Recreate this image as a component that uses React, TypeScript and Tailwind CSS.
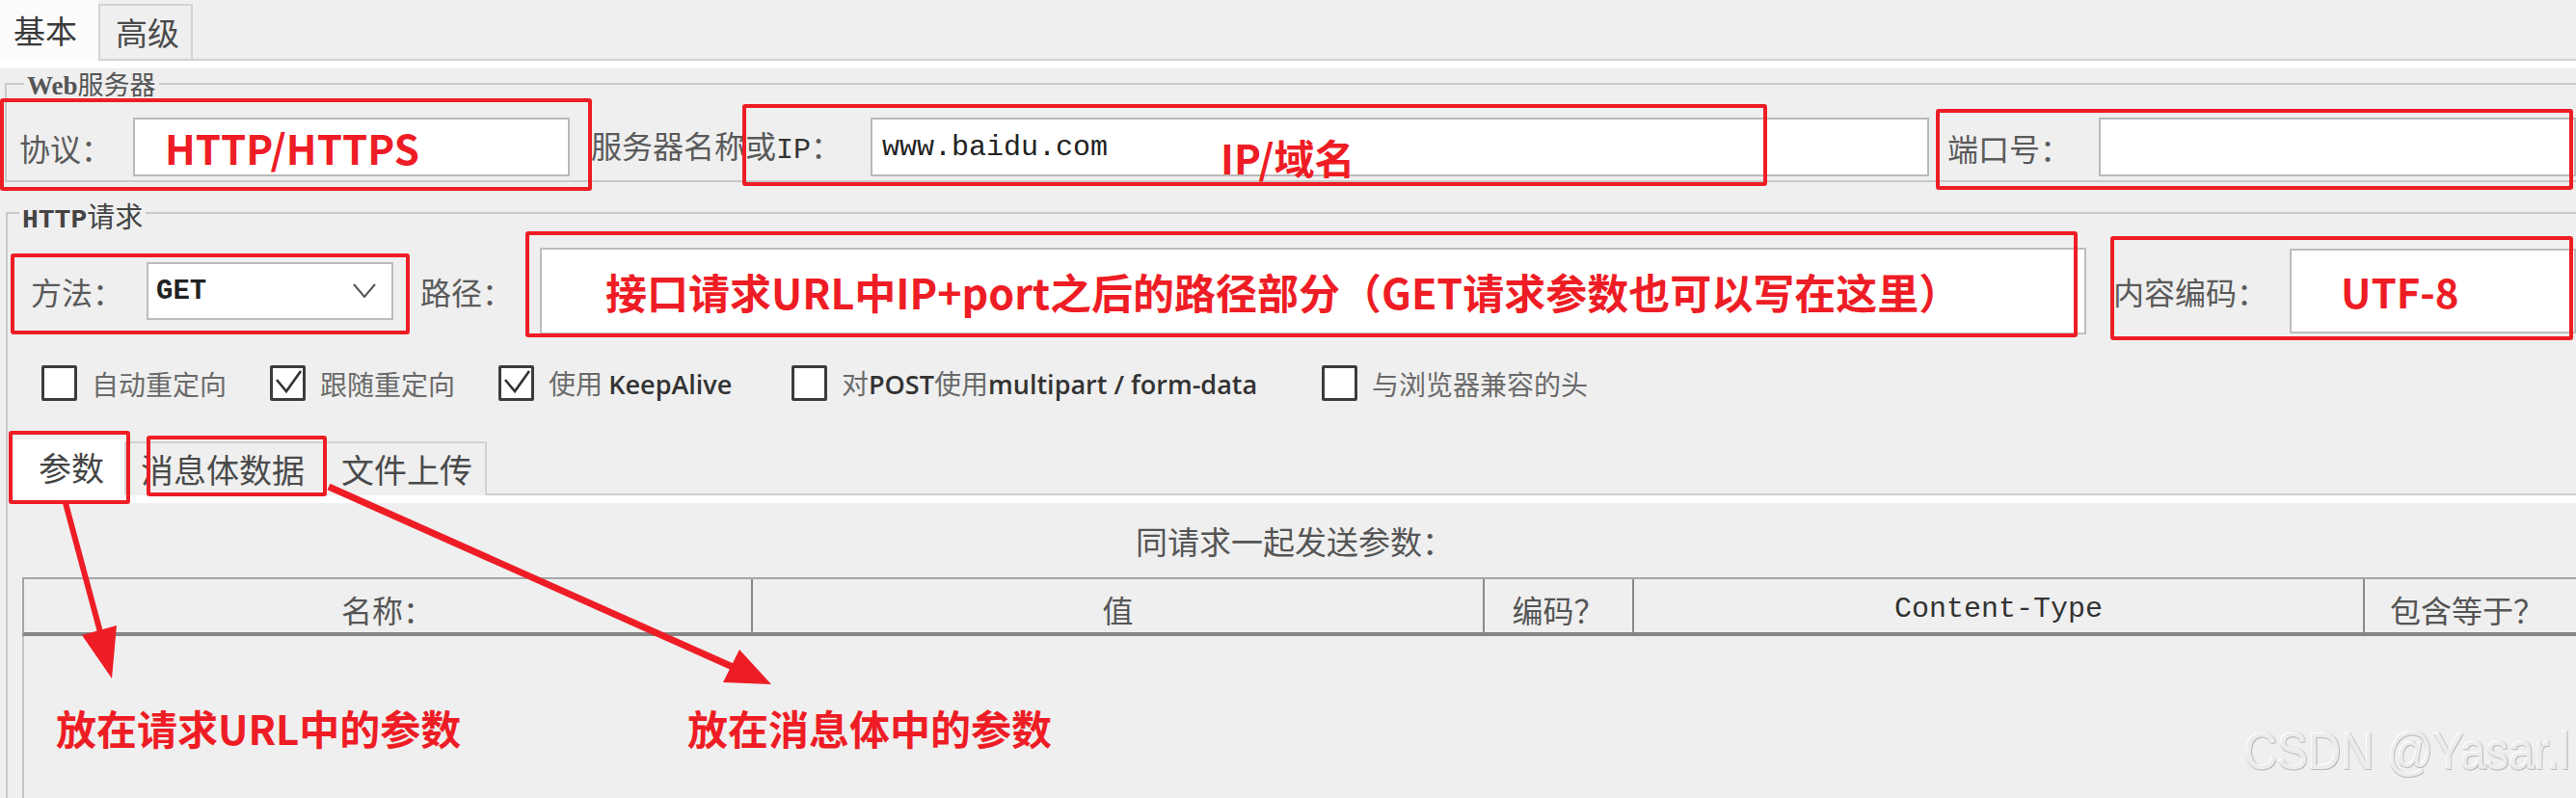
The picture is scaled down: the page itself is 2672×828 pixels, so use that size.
import React from "react";

function Checkbox({ checked }: { checked?: boolean }) {
  return (
    <div className="w-[37px] h-[37px] shrink-0 border-[3px] border-[#3c3c3c] bg-white rounded-[2px] flex items-center justify-center">
      {checked && (
        <svg width="31" height="31" viewBox="0 0 31 31">
          <polyline points="4,12 14,24 29,3" fill="none" stroke="#333" strokeWidth="2.6" />
        </svg>
      )}
    </div>
  );
}

function CheckItem({ checked, w, children }: { checked?: boolean; w: string; children: React.ReactNode }) {
  return (
    <div className={`flex items-center ${w}`}>
      <Checkbox checked={checked} />
      <div className="ml-[15px] text-[28px] leading-none text-[#6a6a6a] whitespace-nowrap">{children}</div>
    </div>
  );
}

export default function App() {
  return (
    <div className="relative w-[2672px] h-[828px] overflow-hidden bg-[#efefef] font-['Noto_Sans_CJK_SC',sans-serif] text-[#555]">
      {/* top tabs */}
      <div className="flex h-[63px]">
        <div className="w-[102px] h-[63px] bg-[#fbfbfb] flex items-center pl-[14px] text-[33px] leading-none text-[#3a3a3a]">基本</div>
        <div className="flex-1 flex items-end border-b-2 border-[#d2d2d2]">
          <div className="w-[98px] h-[57px] border-2 border-b-0 border-[#d4d4d4] flex items-center pl-[16px] text-[33px] leading-none text-[#4a4a4a]">高级</div>
        </div>
      </div>
      <div className="h-[8px] bg-white" />

      {/* Web server group */}
      <div className="mt-[15px] ml-[5px] h-[103px] border-t-2 border-l-2 border-b-2 border-[#c9c9c9]">
        <div className="-mt-[15px] ml-[18px] w-fit bg-[#efefef] px-[3px] h-[28px] text-[27px] leading-[28px] text-[#555]">
          <span className="font-['Liberation_Serif',serif] font-bold">Web</span>服务器
        </div>
        <div className="mt-[21px] flex items-center h-[61px]">
          <div className="ml-[13px] w-[118px] text-[32px] leading-none text-[#5a5a5a]">协议：</div>
          <div className="w-[453px] h-[61px] bg-white border-2 border-[#b9b9b9] flex items-center pl-[31px]">
            <span className="text-[42px] leading-none font-bold text-[#ee1d25]">HTTP/HTTPS</span>
          </div>
          <div className="ml-[22px] w-[290px] text-[32px] leading-none text-[#5a5a5a] whitespace-nowrap">
            服务器名称或<span className="font-['Liberation_Mono',monospace] text-[30px] text-[#333]">IP</span>：
          </div>
          <div className="w-[1098px] h-[61px] bg-white border-2 border-[#b9b9b9] flex items-center pl-[10px]">
            <span className="font-['Liberation_Mono',monospace] text-[30px] leading-none text-[#222]">www.baidu.com</span>
            <span className="ml-[117px] mt-[20px] text-[42px] leading-none font-bold text-[#ee1d25]">IP/域名</span>
          </div>
          <div className="ml-[19px] w-[157px] text-[32px] leading-none text-[#5a5a5a] whitespace-nowrap">端口号：</div>
          <div className="flex-1 h-[61px] bg-white border-2 border-[#b9b9b9]" />
        </div>
      </div>

      {/* HTTP request group */}
      <div className="mt-[31px] ml-[6px] h-[620px] border-t-2 border-l-2 border-[#c9c9c9]">
        <div className="-mt-[14px] ml-[12px] w-fit bg-[#efefef] px-[3px] text-[29px] leading-[30px] text-[#444]">
          <span className="font-['Liberation_Mono',monospace] font-bold text-[28px]">HTTP</span>请求
        </div>

        <div className="mt-[13px] flex items-center h-[90px]">
          <div className="ml-[24px] w-[120px] text-[32px] leading-none text-[#5a5a5a]">方法：</div>
          <div className="w-[256px] h-[60px] bg-white border-2 border-[#bdbdbd] flex items-center pl-[8px] pr-[16px]">
            <span className="flex-1 font-['Liberation_Mono',monospace] font-bold text-[29px] leading-none text-[#222]">GET</span>
            <svg width="24" height="16" viewBox="0 0 24 16">
              <polyline points="1,1 12,14 23,1" fill="none" stroke="#555" strokeWidth="2" />
            </svg>
          </div>
          <div className="ml-[28px] w-[124px] text-[32px] leading-none text-[#5a5a5a]">路径：</div>
          <div className="w-[1604px] h-[90px] bg-white border-2 border-[#bdbdbd] flex items-center pl-[66px]">
            <span className="text-[43px] leading-none font-bold text-[#ee1d25] whitespace-nowrap">接口请求URL中IP+port之后的路径部分（GET请求参数也可以写在这里）</span>
          </div>
          <div className="ml-[28px] w-[183px] text-[32px] leading-none text-[#5a5a5a] whitespace-nowrap">内容编码：</div>
          <div className="flex-1 h-[88px] bg-white border-2 border-[#bdbdbd] flex items-center pl-[51px]">
            <span className="text-[42px] leading-none font-bold text-[#ee1d25]">UTF-8</span>
          </div>
        </div>

        <div className="mt-[32px] ml-[35px] flex items-center h-[37px]">
          <CheckItem w="w-[237px]">自动重定向</CheckItem>
          <CheckItem w="w-[237px]" checked>跟随重定向</CheckItem>
          <CheckItem w="w-[304px]" checked>
            使用 <span className="font-['Open_Sans',sans-serif] font-semibold text-[#333] text-[27px]">KeepAlive</span>
          </CheckItem>
          <CheckItem w="w-[550px]">
            对<span className="font-['Open_Sans',sans-serif] font-semibold text-[#333] text-[27px]">POST</span>使用<span className="font-['Open_Sans',sans-serif] font-semibold text-[#333] text-[27px]">multipart / form-data</span>
          </CheckItem>
          <CheckItem w="w-[400px]">与浏览器兼容的头</CheckItem>
        </div>

        {/* sub tabs */}
        <div className="mt-[40px] ml-[6px] flex items-end h-[58px]">
          <div className="w-[115px] h-[58px] bg-white flex items-center pl-[26px] text-[34px] leading-none text-[#444]">参数</div>
          <div className="w-[210px] h-[56px] border-2 border-b-0 border-[#d2d2d2] flex items-center pl-[15px] text-[34px] leading-none text-[#4a4a4a]">消息体数据</div>
          <div className="w-[166px] h-[56px] border-2 border-b-0 border-l-0 border-[#d2d2d2] flex items-center pl-[15px] text-[34px] leading-none text-[#4a4a4a]">文件上传</div>
          <div className="flex-1 h-full border-b-2 border-[#d0d0d0]" />
        </div>
        <div className="ml-[6px] h-[8px] bg-white" />

        <div className="ml-[6px] mt-[19px] h-[40px] text-center text-[33px] leading-[40px] text-[#555]">同请求一起发送参数：</div>

        {/* table header */}
        <div className="mt-[18px] ml-[15px] flex h-[61px] border-t-2 border-l-2 border-b-[4px] border-t-[#a5a5a5] border-l-[#a5a5a5] border-b-[#858585] text-[32px] leading-none text-[#555]">
          <div className="w-[756px] border-r-2 border-[#8a8a8a] flex items-center justify-center pt-[6px]">名称：</div>
          <div className="w-[759px] border-r-2 border-[#8a8a8a] flex items-center justify-center pt-[6px]">值</div>
          <div className="w-[155px] border-r-2 border-[#8a8a8a] flex items-center justify-center pt-[6px]">编码？</div>
          <div className="w-[758px] border-r-2 border-[#8a8a8a] flex items-center justify-center pt-[6px] font-['Liberation_Mono',monospace] text-[30px] text-[#333]">Content-Type</div>
          <div className="flex-1 flex items-center justify-start pl-[26px] pt-[6px]">包含等于？</div>
        </div>

        {/* table body */}
        <div className="ml-[15px] h-[200px] border-l-2 border-[#c4c4c4] flex pt-[74px] pl-[33px]">
          <div className="w-[655px] text-[42px] leading-none font-bold text-[#ee1d25] whitespace-nowrap">放在请求URL中的参数</div>
          <div className="text-[42px] leading-none font-bold text-[#ee1d25] whitespace-nowrap">放在消息体中的参数</div>
        </div>
      </div>

      {/* red annotation boxes */}
      <div className="absolute left-[0px] top-[102px] w-[614px] h-[96px] border-4 border-[#ee1d25] rounded-[3px]" />
      <div className="absolute left-[770px] top-[108px] w-[1063px] h-[85px] border-4 border-[#ee1d25] rounded-[3px]" />
      <div className="absolute left-[2008px] top-[113px] w-[661px] h-[84px] border-4 border-[#ee1d25] rounded-[3px]" />
      <div className="absolute left-[11px] top-[263px] w-[414px] h-[84px] border-4 border-[#ee1d25] rounded-[3px]" />
      <div className="absolute left-[545px] top-[240px] w-[1610px] h-[110px] border-4 border-[#ee1d25] rounded-[3px]" />
      <div className="absolute left-[2189px] top-[245px] w-[480px] h-[108px] border-4 border-[#ee1d25] rounded-[3px]" />
      <div className="absolute left-[9px] top-[447px] w-[126px] h-[76px] border-4 border-[#ee1d25] rounded-[3px]" />
      <div className="absolute left-[152px] top-[452px] w-[187px] h-[63px] border-4 border-[#ee1d25] rounded-[3px]" />

      {/* arrows */}
      <svg className="absolute left-0 top-0 pointer-events-none" width="2672" height="828" viewBox="0 0 2672 828">
        <line x1="68" y1="522" x2="104" y2="656" stroke="#ee1d25" strokeWidth="6" />
        <polygon points="116,704 85,659 121,649" fill="#ee1d25" />
        <line x1="341" y1="505" x2="760" y2="692" stroke="#ee1d25" strokeWidth="7" />
        <polygon points="800,710 750,708 767,674" fill="#ee1d25" />
      </svg>

      {/* watermark */}
      <div className="absolute right-[6px] top-[752px] origin-right scale-x-[0.88] font-['Liberation_Sans',sans-serif] text-[54px] leading-none text-[#ececec] whitespace-nowrap [text-shadow:1px_1px_0_#b9b9b9,-1px_-1px_0_#ffffff,1px_-1px_0_#d0d0d0,-1px_1px_0_#d0d0d0]">
        CSDN @Yasar.l
      </div>
    </div>
  );
}
